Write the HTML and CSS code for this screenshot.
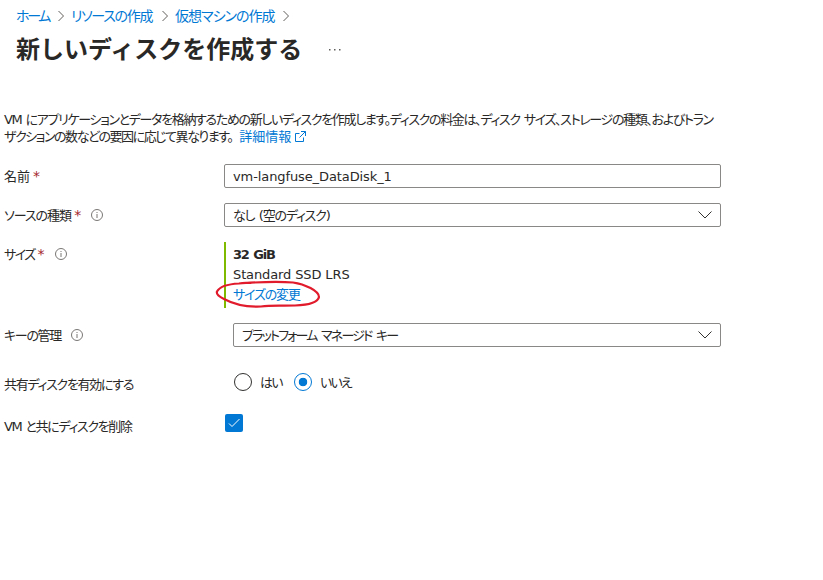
FILE: index.html
```html
<!DOCTYPE html>
<html lang="ja">

<head>
    <meta charset="UTF-8">
    <meta name="viewport" content="width=device-width, initial-scale=1.0">
    <title>新しいディスクを作成する</title>
    <link rel="stylesheet" href="styles.css">
</head>

<body>
    <nav class="breadcrumb">
        <a class="crumb-home" href="#">ホーム</a>
        <svg class="sep" viewBox="0 0 6 12"><path d="M0.5 1l5 5-5 5" /></svg>
        <a class="crumb-resource" href="#">リソースの作成</a>
        <svg class="sep" viewBox="0 0 6 12"><path d="M0.5 1l5 5-5 5" /></svg>
        <a class="crumb-vm" href="#">仮想マシンの作成</a>
        <svg class="sep" viewBox="0 0 6 12"><path d="M0.5 1l5 5-5 5" /></svg>
    </nav>

    <header class="title-bar">
        <h1>新しいディスクを作成する</h1>
        <svg class="more" viewBox="0 0 12 2"><path d="M0 0h1.5v1.5H0zM5 0h1.5v1.5H5zM10 0h1.5v1.5H10z" /></svg>
    </header>

    <p class="description">
        <span class="desc-first">VM にアプリケーションとデータを格納するための新しいディスクを作成します。ディスクの料金は、ディスク サイズ、ストレージの種類、およびトラン</span><br>
        <span class="desc-second">ザクションの数などの要因に応じて異なります。</span><a class="details" href="#">詳細情報</a><svg class="external" viewBox="0 0 11 11"><path d="M4.500 2.500h-4v8h8v-4M6 .5h4.500v4.500M10.500.5L4.500 6.500" /></svg>
    </p>

    <form class="form">
        <div class="row">
            <label class="label"><span class="l-name">名前</span><span class="required">*</span></label>
            <input class="box" type="text" value="vm-langfuse_DataDisk_1">
        </div>

        <div class="row">
            <div class="label">
                <span class="l-source">ソースの種類</span><span class="required">*</span>
                <svg class="info" viewBox="0 0 12 12"><circle cx="6" cy="6" r="5.500" /><path d="M6 5v4M6 3v1" /></svg>
            </div>
            <div class="box select">
                <span class="v-source">なし (空のディスク)</span>
                <svg class="chevron" viewBox="0 0 14 8"><path d="M.5.500L7 7l6.500-6.500" /></svg>
            </div>
        </div>

        <div class="row row-size">
            <div class="label">
                <span class="l-size">サイズ</span><span class="required">*</span>
                <svg class="info" viewBox="0 0 12 12"><circle cx="6" cy="6" r="5.500" /><path d="M6 5v4M6 3v1" /></svg>
            </div>
            <div class="size">
                <strong>32 GiB</strong>
                <span class="sku">Standard SSD LRS</span>
                <a class="change" href="#">サイズの変更</a>
                <svg class="marker" viewBox="0 0 108 30"><path d="M29 3C46 2 65 1.500 78 2.500C90 4 104 11 104 17C103 22 94 25 80 25.500C66 26 57 25 46 26.500C34 27 20 25 9 19C3 16 1 14 2 11.500C5 6 14 4 24 3.500C29 2.500 32 3 36 3" /></svg>
            </div>
        </div>

        <div class="row row-key">
            <div class="label">
                <span class="l-key">キーの管理</span>
                <svg class="info" viewBox="0 0 12 12"><circle cx="6" cy="6" r="5.500" /><path d="M6 5v4M6 3v1" /></svg>
            </div>
            <div class="box select">
                <span class="v-key">プラットフォーム マネージド キー</span>
                <svg class="chevron" viewBox="0 0 14 8"><path d="M.5.500L7 7l6.500-6.500" /></svg>
            </div>
        </div>

        <div class="row row-shared">
            <div class="label"><span class="l-shared">共有ディスクを有効にする</span></div>
            <div class="radios">
                <span class="radio"></span><span class="yes">はい</span>
                <span class="radio checked"></span><span class="no">いいえ</span>
            </div>
        </div>

        <div class="row row-delete">
            <div class="label"><span class="l-delete">VM と共にディスクを削除</span></div>
            <span class="checkbox"><svg viewBox="0 0 18 18"><path d="M4 9.500l3 3 7.500-7.500" /></svg></span>
        </div>
    </form>
</body>

</html>
```

FILE: styles.css
```css
* {
    box-sizing: border-box;
}

body {
    margin: 0;
    background: #fff;
    color: #292827;
    font-family: "DejaVu Sans", "Noto Sans CJK JP", sans-serif;
    font-size: 13px;
    line-height: 17px;
    font-feature-settings: "palt";
    white-space: nowrap;
}

a {
    color: #0078d4;
    text-decoration: none;
}

svg {
    display: block;
    flex: none;
    fill: none;
    stroke: #605e5c;
}

.breadcrumb {
    display: flex;
    align-items: center;
    height: 20px;
    margin-left: 16px;
    padding-top: 12px;
}

.breadcrumb a {
    font-size: 14px;
}

.crumb-home {
    width: 34px;
    letter-spacing: -2.3px;
}

.crumb-resource {
    width: 83px;
    letter-spacing: -1.3px;
}

.crumb-vm {
    width: 100px;
    letter-spacing: -1px;
}

.sep {
    width: 6px;
    height: 12px;
    margin: 0 7px 0 8px;
}

.title-bar {
    display: flex;
    align-items: center;
    height: 36px;
    margin: 11px 0 0 16px;
}

h1 {
    width: 285px;
    margin: -2px 0 0;
    font-family: "Noto Sans CJK JP", sans-serif;
    font-size: 24px;
    font-weight: 700;
    font-feature-settings: normal;
    line-height: 36px;
}

.more {
    width: 12px;
    height: 2px;
    margin: 2px 0 0 28px;
    fill: #605e5c;
    stroke: none;
}

.description {
    height: 34px;
    margin: 44px 0 0 4px;
}

.desc-first {
    letter-spacing: -1.34px;
    word-spacing: 1.3px;
}

.desc-second {
    letter-spacing: -1.47px;
}

.details {
    margin-left: 7px;
}

.external {
    display: inline-block;
    width: 11px;
    height: 11px;
    margin-left: 4px;
    vertical-align: -1px;
    stroke: #0078d4;
}

.form {
    width: 721px;
    padding: 19px 0 0 4px;
}

.row {
    display: flex;
    height: 24px;
    margin-bottom: 15px;
}

.label {
    display: flex;
    align-items: center;
    flex: none;
    width: 220px;
    height: 24px;
}

.l-source {
    letter-spacing: -1px;
}

.l-size {
    letter-spacing: -1.6px;
}

.l-shared {
    letter-spacing: -1.3px;
}

.l-delete {
    letter-spacing: -1.35px;
    word-spacing: 1.3px;
}

.l-key {
    letter-spacing: -1.3px;
}

.required {
    margin-left: 3px;
    color: #a4262c;
    font-size: 14px;
}

.info {
    width: 12px;
    height: 12px;
    margin-left: 10px;
    stroke: #797775;
}

.box {
    flex: 1;
    min-width: 0;
    height: 24px;
    margin: 0;
    padding: 0 8px;
    border: 1px solid #8a8886;
    border-radius: 2px;
    background: #fff;
    color: inherit;
    font: inherit;
    letter-spacing: -0.1px;
}

.select {
    display: flex;
    align-items: center;
    justify-content: space-between;
    padding-right: 8px;
}

.v-source {
    letter-spacing: -1.2px;
    word-spacing: 1.5px;
}

.v-key {
    letter-spacing: -1.8px;
    word-spacing: 2px;
}

.chevron {
    width: 14px;
    height: 8px;
    stroke: #323130;
}

.row-size {
    height: 66px;
}

.size {
    position: relative;
    display: flex;
    flex-direction: column;
    padding: 3px 0 0 7px;
    border-left: 2px solid #7fba00;
    line-height: 20px;
}

.size strong {
    letter-spacing: -1.25px;
    word-spacing: 1.5px;
}

.sku {
    letter-spacing: -0.12px;
}

.change {
    letter-spacing: -1.2px;
}

/* hand-drawn ring around the link */
.marker {
    position: absolute;
    top: 38px;
    left: -11px;
    width: 108px;
    height: 30px;
    stroke: #e11b2c;
    stroke-width: 2.2;
    stroke-linecap: round;
}

.row-key .label {
    width: 229px;
}

.row-shared {
    margin-top: 23px;
}

.row-shared .label {
    margin-top: 2px;
}

.radios {
    display: flex;
    align-items: center;
    height: 24px;
    margin-left: 10px;
}

.radio {
    width: 18px;
    height: 18px;
    border: 1px solid #323130;
    border-radius: 50%;
}

.radio.checked {
    border-color: #0078d4;
    background: radial-gradient(circle, #0078d4 4px, transparent 4.6px);
}

.yes {
    width: 34px;
    margin-left: 8px;
    letter-spacing: -1.8px;
}

.no {
    margin-left: 8px;
    letter-spacing: -1.8px;
}

.row-delete {
    margin-top: 17px;
}

.row-delete .label {
    margin-top: 3px;
}

.checkbox {
    width: 18px;
    height: 18px;
    margin: 3px 0 0 1px;
    border-radius: 2px;
    background: #0078d4;
}

.checkbox svg {
    stroke: #fff;
}
```
